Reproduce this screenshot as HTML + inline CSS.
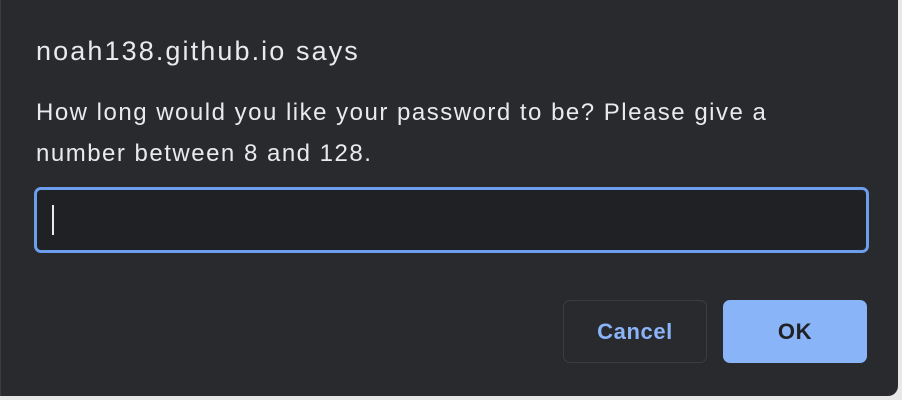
<!DOCTYPE html>
<html><head><style>
html,body{margin:0;padding:0;width:902px;height:400px;overflow:hidden;background:#e8e8e8;}
.dlg{position:absolute;left:0;top:0;width:897px;height:396px;background:#292a2d;border-left:1px solid #3c3d40;border-bottom-right-radius:10px;font-family:"Liberation Sans",sans-serif;color:#e8eaed;}
.t{position:absolute;left:35px;top:36px;font-size:27px;letter-spacing:2.1px;white-space:nowrap;}
.m{position:absolute;left:35px;top:92px;font-size:24px;line-height:41px;letter-spacing:1.5px;white-space:nowrap;}
.in{position:absolute;left:33px;top:187px;width:829px;height:60px;border:3px solid #6d9eee;border-radius:7px;background:#202124;box-sizing:content-box;}
.cur{position:absolute;left:15px;top:15px;width:2px;height:30px;background:#e8eaed;}
.b{position:absolute;top:300px;height:63px;border-radius:7px;font-size:22px;font-weight:bold;letter-spacing:0.6px;display:flex;align-items:center;justify-content:center;box-sizing:border-box;}
.c{left:562px;width:144px;border:1px solid #3c3d40;color:#8ab4f8;background:#292a2d;}
.o{left:722px;width:144px;background:#8ab4f8;color:#202124;}
</style></head><body>
<div class="dlg">
<div class="t">noah138.github.io says</div>
<div class="m">How long would you like your password to be? Please give a<br>number between 8 and 128.</div>
<div class="in"><div class="cur"></div></div>
<div class="b c">Cancel</div>
<div class="b o">OK</div>
</div>
</body></html>
